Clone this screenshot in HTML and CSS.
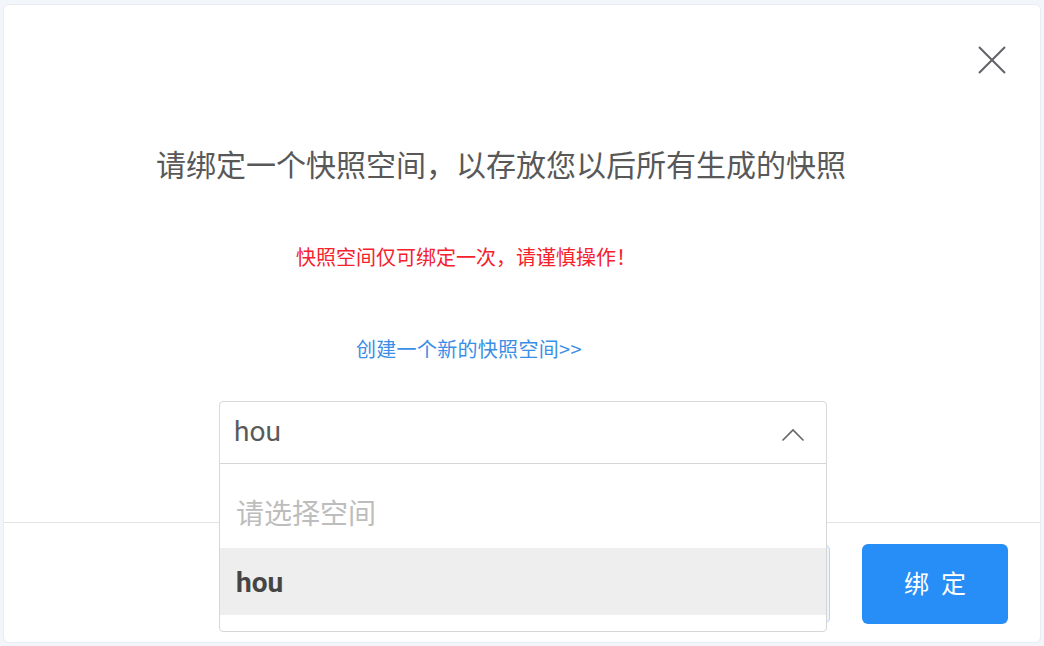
FILE: index.html
```html
<!DOCTYPE html>
<html lang="zh-CN">
<head>
<meta charset="utf-8">
<title>绑定快照空间</title>
<link rel="stylesheet" href="styles.css">
</head>
<body>
<div class="dialog">
  <button class="close" aria-label="关闭">
    <svg width="30" height="30" viewBox="0 0 30 30"><path d="M2 2 L28 28 M28 2 L2 28" stroke="#616266" stroke-width="2" fill="none"/></svg>
  </button>
  <div class="body">
    <div class="title">请绑定一个快照空间，以存放您以后所有生成的快照</div>
    <div class="warn">快照空间仅可绑定一次，请谨慎操作！</div>
    <a class="link" href="#">创建一个新的快照空间&gt;&gt;</a>
    <div class="select">
      <div class="select-box">
        <span class="value">hou</span>
        <svg class="arrow" width="24" height="14" viewBox="0 0 24 14"><polyline points="1.5,12.5 12,2 22.5,12.5" stroke="#666" stroke-width="1.6" fill="none"/></svg>
      </div>
      <ul class="menu">
        <li class="option placeholder">请选择空间</li>
        <li class="option active">hou</li>
      </ul>
    </div>
  </div>
  <div class="footer">
    <button class="btn btn-cancel">取 消</button>
    <button class="btn btn-primary">绑定</button>
  </div>
</div>
</body>
</html>
```
FILE: styles.css
```css
html, body {
  margin: 0;
  padding: 0;
}
body {
  width: 1044px;
  height: 646px;
  background: #f2f5fa;
  font-family: Roboto, "Noto Sans CJK SC", sans-serif;
  overflow: hidden;
}
.dialog {
  position: relative;
  box-sizing: border-box;
  margin: 4px 3px 3px 3px;
  height: 639px;
  background: #fff;
  border: 1px solid #e8ecf3;
  border-radius: 6px;
  display: flex;
  flex-direction: column;
}
.close {
  position: absolute;
  top: 40px;
  right: 33px;
  width: 30px;
  height: 30px;
  padding: 0;
  border: 0;
  background: transparent;
  cursor: pointer;
}
.close svg { display: block; }
.body {
  flex: 1;
  display: flex;
  flex-direction: column;
  align-items: flex-start;
  padding-top: 138px;
}
.title {
  font-family: "Noto Sans CJK SC", sans-serif;
  font-size: 30px;
  line-height: 40px;
  color: #585858;
  padding-left: 152px;
}
.warn {
  font-family: "Noto Sans CJK SC", sans-serif;
  font-size: 20px;
  line-height: 30px;
  color: #f5222d;
  margin-top: 59px;
  padding-left: 292px;
}
.link {
  font-family: "Noto Sans CJK SC", sans-serif;
  font-size: 20px;
  line-height: 30px;
  color: #3a8ee6;
  text-decoration: none;
  margin-top: 62px;
  margin-left: 352px;
  letter-spacing: 0.3px;
}
.select {
  position: relative;
  margin-top: 37px;
  margin-left: 215px;
  width: 608px;
  z-index: 2;
}
.select-box {
  box-sizing: border-box;
  height: 63px;
  border: 1px solid #d9d9d9;
  border-radius: 4px 4px 0 0;
  display: flex;
  align-items: center;
  justify-content: space-between;
  padding: 0 21px 0 14px;
  background: #fff;
}
.value {
  font-size: 28px;
  color: #5a5a5a;
  padding-bottom: 3px;
}
.arrow { display: block; margin-top: 4px; }
.menu {
  position: absolute;
  left: 0;
  right: 0;
  top: 62px;
  margin: 0;
  padding: 16px 0;
  list-style: none;
  background: #fff;
  border: 1px solid #d6d6d6;
  border-radius: 0 0 4px 4px;
}
.option {
  height: 67px;
  line-height: 67px;
  padding-left: 16px;
  font-size: 28px;
}
.placeholder {
  color: #bdbdbd;
  font-family: "Noto Sans CJK SC", sans-serif;
  line-height: 64px;
  height: 68px;
}
.active {
  background: #eeeeee;
  color: #454545;
  font-weight: 700;
  line-height: 70px;
}
.footer {
  height: 120px;
  box-sizing: border-box;
  border-top: 1px solid #e4e4e4;
  display: flex;
  justify-content: flex-end;
  align-items: flex-start;
  gap: 32px;
  padding: 21px 32px 0 0;
}
.btn {
  width: 146px;
  height: 80px;
  border-radius: 6px;
  font-family: "Noto Sans CJK SC", sans-serif;
  font-size: 25px;
  cursor: pointer;
}
.btn-cancel {
  background: #ecf5ff;
  border: 1px solid #b3d8ff;
  color: #409eff;
}
.btn-primary {
  background: #268ef6;
  border: 0;
  color: #fff;
  letter-spacing: 12px;
  padding: 0 0 4px 12px;
}
```
